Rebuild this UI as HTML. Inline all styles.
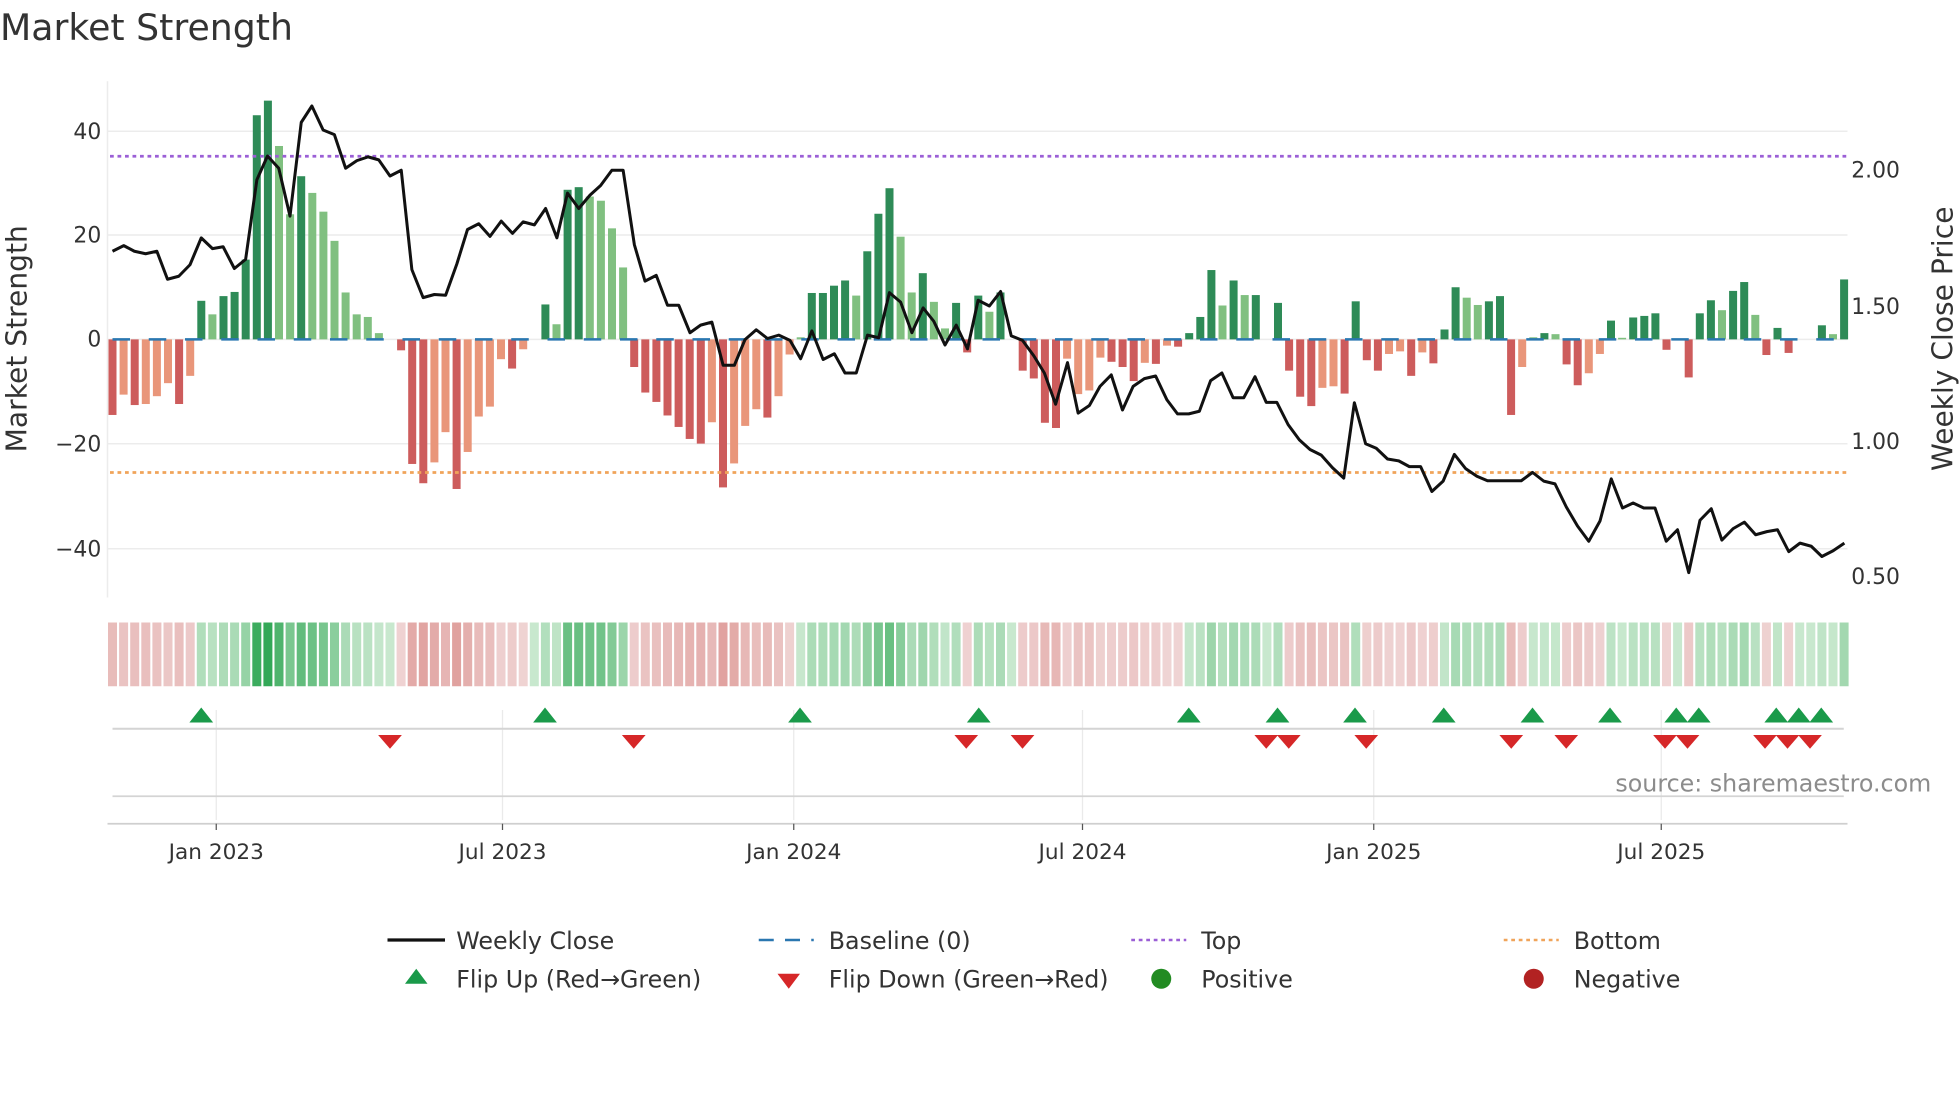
<!DOCTYPE html>
<html><head><meta charset="utf-8"><style>
html,body{margin:0;padding:0;background:#fff;}
svg{display:block;font-family:"DejaVu Sans","Liberation Sans",sans-serif;}
</style></head><body>
<svg id="s" width="1960" height="1102" viewBox="0 0 1568 881.6" xmlns="http://www.w3.org/2000/svg">
<rect width="1568" height="882" fill="#fff"/>
<text x="0" y="32" font-size="29" fill="#333">Market Strength</text>
<g stroke="#ececec" stroke-width="1.2">
<line x1="86" y1="105" x2="1478" y2="105"/><line x1="86" y1="188" x2="1478" y2="188"/>
<line x1="86" y1="271.5" x2="1478" y2="271.5"/><line x1="86" y1="355" x2="1478" y2="355"/>
<line x1="86" y1="439" x2="1478" y2="439"/>
<line x1="86" y1="65" x2="86" y2="478"/>
</g>
<g font-size="17.5" fill="#333" text-anchor="end">
<text x="81" y="111">40</text><text x="81" y="194">20</text><text x="81" y="277">0</text>
<text x="81" y="361">−20</text><text x="81" y="445">−40</text>
</g>
<g font-size="17.5" fill="#333">
<text x="1481" y="142">2.00</text><text x="1481" y="251">1.50</text>
<text x="1481" y="359">1.00</text><text x="1481" y="467">0.50</text>
</g>
<text transform="translate(21,271) rotate(-90)" font-size="22.5" fill="#333" text-anchor="middle">Market Strength</text>
<text transform="translate(1562,271) rotate(-90)" font-size="22.5" fill="#333" text-anchor="middle">Weekly Close Price</text>
<g id="bars"></g>
<line x1="90" y1="271.5" x2="1478" y2="271.5" stroke="#2a77b0" stroke-width="2" stroke-dasharray="14 15"/>
<line x1="88" y1="125" x2="1478" y2="125" stroke="#9b5fd6" stroke-width="2.2" stroke-dasharray="3 3"/>
<line x1="88" y1="378" x2="1478" y2="378" stroke="#f0a45a" stroke-width="2.2" stroke-dasharray="3 3"/>
<polyline id="pl" fill="none" stroke="#111" stroke-width="2.4" stroke-linejoin="round"/>
<g id="heat"></g>
<g stroke="#eaeaea" stroke-width="1">
<line x1="173" y1="568" x2="173" y2="656"/><line x1="402" y1="568" x2="402" y2="656"/>
<line x1="635" y1="568" x2="635" y2="656"/><line x1="866" y1="568" x2="866" y2="656"/>
<line x1="1099" y1="568" x2="1099" y2="656"/><line x1="1329" y1="568" x2="1329" y2="656"/>
</g>
<line x1="90" y1="583" x2="1475" y2="583" stroke="#d4d4d4" stroke-width="1.6"/>
<line x1="90" y1="637" x2="1475" y2="637" stroke="#d4d4d4" stroke-width="1.4"/>
<line x1="86" y1="659" x2="1478" y2="659" stroke="#cfcfcf" stroke-width="1.4"/>
<g stroke="#555" stroke-width="1">
<line x1="173" y1="659" x2="173" y2="664"/><line x1="402" y1="659" x2="402" y2="664"/>
<line x1="635" y1="659" x2="635" y2="664"/><line x1="866" y1="659" x2="866" y2="664"/>
<line x1="1099" y1="659" x2="1099" y2="664"/><line x1="1329" y1="659" x2="1329" y2="664"/>
</g>
<g id="mk"></g>
<text x="1545" y="633" font-size="19" fill="#8c8c8c" text-anchor="end">source: sharemaestro.com</text>
<g font-size="17.3" fill="#333" text-anchor="middle">
<text x="173" y="687">Jan 2023</text><text x="402" y="687">Jul 2023</text>
<text x="635" y="687">Jan 2024</text><text x="866" y="687">Jul 2024</text>
<text x="1099" y="687">Jan 2025</text><text x="1329" y="687">Jul 2025</text>
</g>
<g font-size="19" fill="#333">
<line x1="310" y1="752" x2="356" y2="752" stroke="#111" stroke-width="2.6"/>
<text x="365" y="759">Weekly Close</text>
<line x1="607" y1="752" x2="651" y2="752" stroke="#2a77b0" stroke-width="2" stroke-dasharray="12 9"/>
<text x="663" y="759">Baseline (0)</text>
<line x1="905" y1="752" x2="949" y2="752" stroke="#9b5fd6" stroke-width="2" stroke-dasharray="3 3"/>
<text x="961" y="759">Top</text>
<line x1="1203" y1="752" x2="1247" y2="752" stroke="#f0a45a" stroke-width="2" stroke-dasharray="3 3"/>
<text x="1259" y="759">Bottom</text>
<polygon points="333,775 342,787 324,787" fill="#1a9a4a"/>
<text x="365" y="790">Flip Up (Red→Green)</text>
<polygon points="622,779 640,779 631,791" fill="#d62728"/>
<text x="663" y="790">Flip Down (Green→Red)</text>
<circle cx="929" cy="783" r="8" fill="#228b22"/>
<text x="961" y="790">Positive</text>
<circle cx="1227" cy="783" r="8" fill="#b22222"/>
<text x="1259" y="790">Negative</text>
</g>
</svg>
<script>
var V=[[-14.5,1],[-10.6,0],[-12.6,1],[-12.4,0],[-10.9,0],[-8.4,0],[-12.4,1],[-7,0],[7.4,1],[4.8,0],[8.3,1],[9.1,1],[15.3,1],[43,1],[45.8,1],[37.1,0],[24,0],[31.3,1],[28.1,0],[24.5,0],[18.9,0],[9,0],[4.8,0],[4.3,0],[1.2,0],[0,0],[-2.1,1],[-23.9,1],[-27.6,1],[-23.6,0],[-17.8,0],[-28.7,1],[-21.6,0],[-14.8,0],[-12.9,0],[-3.8,0],[-5.6,1],[-1.9,0],[0,0],[6.7,1],[2.9,0],[28.7,1],[29.2,1],[27.4,0],[26.6,0],[21.3,0],[13.8,0],[-5.3,1],[-10.2,1],[-12,1],[-14.6,1],[-16.8,1],[-19.1,1],[-20,1],[-15.9,0],[-28.4,1],[-23.8,0],[-16.6,0],[-13.4,0],[-15,1],[-10.9,0],[-2.9,0],[0.4,0],[8.9,1],[8.9,1],[10.3,1],[11.3,1],[8.4,0],[16.9,1],[24.1,1],[29,1],[19.7,0],[9,0],[12.7,1],[7.2,0],[2.1,0],[7,1],[-2.5,1],[8.4,1],[5.3,0],[9,1],[0,0],[-6,1],[-7.5,1],[-16,1],[-17,1],[-3.7,0],[-10.5,0],[-9.8,0],[-3.5,0],[-4.3,1],[-5.3,1],[-8,1],[-4.5,0],[-4.7,1],[-1.2,0],[-1.4,1],[1.2,1],[4.3,1],[13.3,1],[6.5,0],[11.3,1],[8.5,0],[8.5,1],[0,0],[7,1],[-6,1],[-11,1],[-12.8,1],[-9.3,0],[-9,0],[-10.4,1],[7.3,1],[-4,1],[-6,1],[-2.8,0],[-2.3,0],[-7,1],[-2.5,0],[-4.6,1],[1.9,1],[10,1],[8,0],[6.6,0],[7.3,1],[8.3,1],[-14.5,1],[-5.3,0],[0.4,0],[1.2,1],[1,0],[-4.8,1],[-8.8,1],[-6.5,0],[-2.8,0],[3.6,1],[0.3,0],[4.2,1],[4.5,1],[5,1],[-2,1],[0,0],[-7.3,1],[5,1],[7.5,1],[5.6,0],[9.3,1],[11,1],[4.7,0],[-3,1],[2.2,1],[-2.6,1],[0,0],[0,0],[2.7,1],[1,0],[11.5,1]];
var NS="http://www.w3.org/2000/svg";
function el(t,a,p){var e=document.createElementNS(NS,t);for(var k in a)e.setAttribute(k,a[k]);p.appendChild(e);return e;}
var bars=document.getElementById('bars'),heat=document.getElementById('heat');
for(var i=0;i<V.length;i++){var v=V[i][0],d=V[i][1],x=90+8.88*i,h=Math.abs(v)*4.17;
 var c=v>=0?(d?'#2e8b57':'#80c080'):(d?'#cd5c5c':'#e9967a');
 if(h>0.3)el('rect',{x:x-3.2,y:v>=0?271.5-h:271.5,width:6.4,height:h,fill:c},bars);
 var a=Math.min(1,Math.abs(v)/46);
 var col;
 if(v>=0){var r=Math.round(200-150*a),g=Math.round(232-64*a),b=Math.round(206-120*a);col='rgb('+r+','+g+','+b+')';}
 else{var r=Math.round(240-25*a),g=Math.round(214-84*a),b=Math.round(214-88*a);col='rgb('+r+','+g+','+b+')';}
 el('rect',{x:x-3.6,y:498,width:7.2,height:51,fill:col},heat);}
var P="90,201 99,196.5 107.5,201 116.5,203 125.5,201 134,223.4 143,221 152,211.8 161,190.3 170,198.9 178.5,197.4 187.5,214.8 196.5,207.5 205.5,143.8 214,124.8 223,134.6 232,172.9 241,97.9 249.5,84.8 258.5,104 267.5,107.7 276.5,134.6 285.5,128.5 294.5,125.5 303,127.9 312,140.8 321,136.2 329.5,215.7 338.5,238.1 347.5,235.6 356.5,236.2 365.5,211.1 374,183.6 383,179 392,189.1 401,176.9 410,186.7 418.5,177.5 427.5,179.9 436.5,166.8 445.5,190.3 454,154.5 463,166.8 472,156.1 480.5,148.4 489.5,136.2 498.5,136.2 507.5,195.8 516,224.9 525,220.3 534,244.2 543,244.2 552,266.2 560.5,260.1 569.5,257.7 578.5,292.2 587.5,292.2 596,271.7 605,263.8 614,270.8 623,268.1 632,272.3 640.5,287 649.5,264.7 658.5,287.6 667.5,283 676,298.4 685,298.4 694,268.1 703,270.2 711.5,234.1 720.5,241.7 729.5,266.2 738.5,246.3 747,257 756,276 765,260.1 774,279.1 782.5,240.2 791.5,244.8 800.5,233.2 809,268.7 818,272.3 827,284.6 835.5,298.4 844.5,323.4 854,290.1 862.5,330.5 871.5,324.4 880,309.1 889,299.9 898,328 906.5,309.1 915.5,302.9 924.5,300.8 933.5,319.8 942,331.1 951,331.1 959.5,329 968.5,304.5 977.5,298.4 986.5,318.2 995,318.2 1004,301.4 1013,321.9 1021.5,321.9 1030.5,339.7 1039.5,351.9 1048,359.6 1057,364.1 1066,374.2 1075,382.5 1083.5,322.2 1092.5,355 1101,358.6 1110,367.2 1119,368.7 1127.5,373.3 1136.5,373.3 1145.5,393.2 1154.5,384.9 1163.5,363.5 1172.5,374.9 1181.5,381 1190,384.6 1199,384.6 1208.5,384.6 1217,384.6 1226,377.9 1235,384.9 1244,387.1 1253,405.5 1262,420.8 1271,433 1280,416.8 1289,383.1 1298,406.4 1306.5,402.4 1315,406.4 1324,406.4 1333,433 1342,423.8 1351,458.1 1360,416.2 1369,407 1377.5,432.1 1386.5,422.9 1395.5,417.7 1404.5,427.8 1413.5,425.3 1422,423.8 1431,441.3 1440,434.5 1449,437 1457.5,445.2 1466.5,440.6 1475.5,434.5";
document.getElementById('pl').setAttribute('points',P);
var mk=document.getElementById('mk');
[161,436,640,783,951,1022,1084,1155,1226,1288,1341,1359,1421,1439,1457].forEach(function(x){el('polygon',{points:(x)+',566 '+(x+9.5)+',578 '+(x-9.5)+',578',fill:'#1a9a4a'},mk);});
[312,507,773,818,1013,1031,1093,1209,1253,1332,1350,1412,1430,1448].forEach(function(x){el('polygon',{points:(x-9.5)+',588 '+(x+9.5)+',588 '+x+',599',fill:'#d62728'},mk);});
</script>
</body></html>
